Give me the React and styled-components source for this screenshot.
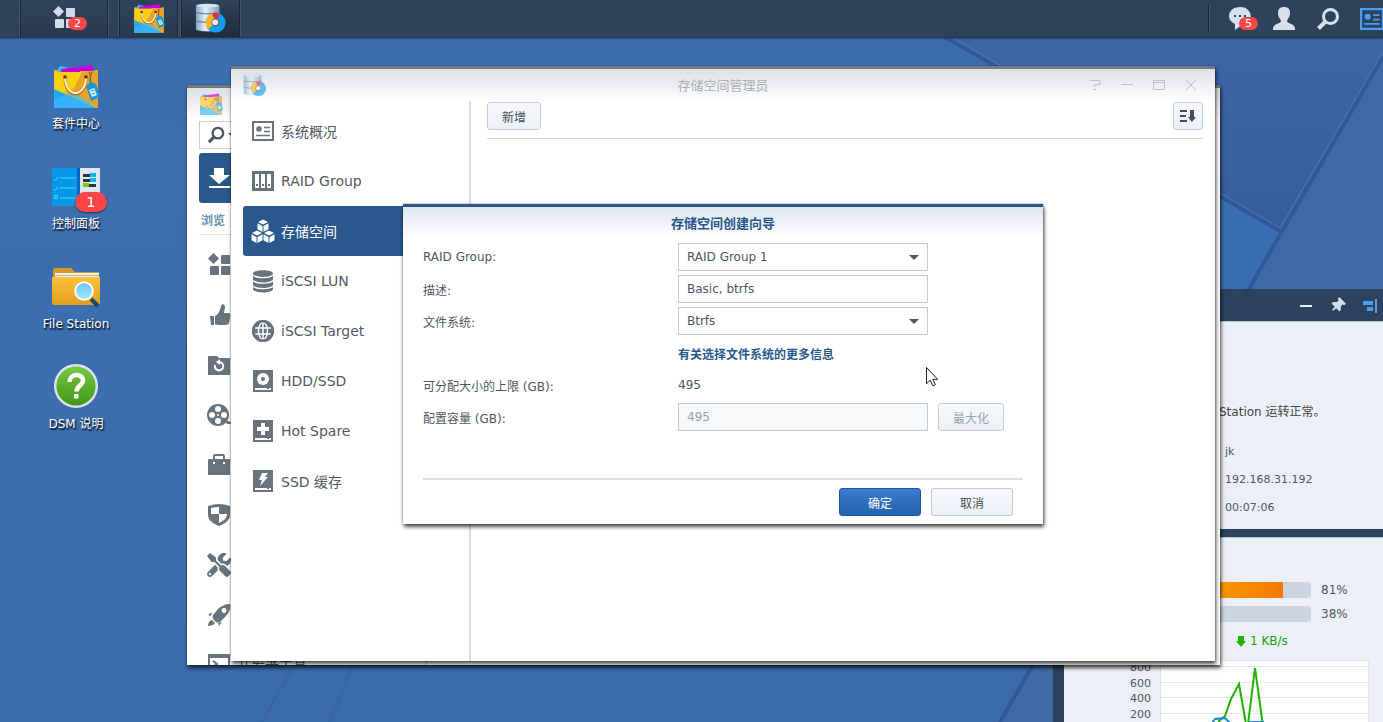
import React, { useState } from 'react'
import styled, { createGlobalStyle } from 'styled-components'
import { FaThumbtack, FaTools } from 'react-icons/fa'

const GlobalStyle = createGlobalStyle`
  * { box-sizing: border-box; }
  body {
    margin: 0;
    overflow: hidden;
    font-family: "DejaVu Sans", "Noto Sans CJK SC", sans-serif;
    font-size: 12px;
    color: #4d5762;
  }
  button, input, select { font: inherit; color: inherit; }
`

/* ---------- desktop ---------- */

const Desktop = styled.div`
  position: relative;
  display: flex;
  flex-direction: column;
  height: 100vh;
  overflow: hidden;
  background: #3b6dae;
`

const Wallpaper = styled.svg`
  position: absolute;
  inset: 0;
  width: 100%;
  height: 100%;
`

const Taskbar = styled.header`
  position: relative;
  display: flex;
  flex: none;
  height: 38px;
  background: #2e435b;
  border-bottom: 1px solid #273649;
  box-shadow: 0 1px 2px rgba(20, 40, 80, 0.4);
`

const TaskButton = styled.button`
  position: relative;
  display: flex;
  align-items: center;
  justify-content: center;
  width: ${({ $wide }) => ($wide ? '90px' : '61px')};
  margin-left: ${({ $gap }) => $gap || '0'};
  padding: 0 0 1px;
  border: 1px solid #44566b;
  border-width: 0 1px;
  background: linear-gradient(${({ $active }) => ($active ? '#2f435b, #1f2d3e' : '#2f435b, #283a4f')});
  box-shadow: inset 1px 0 0 #1b2735, inset -1px 0 0 #1b2735;
`

const Tray = styled.div`
  display: flex;
  flex: none;
  align-items: center;
  margin: 0 -11px 0 auto;
  padding-left: 10px;
  background: linear-gradient(#17202b, #17202b) 0 6px / 1px 25px no-repeat,
    linear-gradient(#4a5c72, #4a5c72) 1px 6px / 1px 25px no-repeat;
`

const TrayButton = styled.button`
  position: relative;
  display: flex;
  align-items: center;
  justify-content: center;
  width: 44px;
  height: 36px;
  padding: 0;
  border: 0;
  background: none;
`

const Badge = styled.span`
  position: absolute;
  left: ${({ $left }) => $left};
  top: ${({ $top }) => $top};
  min-width: ${({ $big }) => ($big ? '32px' : '19px')};
  border-radius: 10px;
  background: #fb4648;
  color: #fff;
  text-align: center;
  font-size: ${({ $big }) => ($big ? '14px' : '11px')};
  line-height: ${({ $big }) => ($big ? '20px' : '13px')};
  text-shadow: none;
  box-shadow: ${({ $big }) => ($big ? '0 1px 2px rgba(0,0,0,.5)' : 'none')};
`

const Shortcuts = styled.nav`
  position: relative;
  display: flex;
  flex-direction: column;
  width: 152px;
  padding-top: 24px;
`

const Shortcut = styled.a`
  position: relative;
  display: flex;
  flex-direction: column;
  align-items: center;
  gap: 6px;
  height: 100px;
  color: #fff;
  line-height: 16px;
  text-decoration: none;
  text-shadow: 1px 1px 2px #10254a, 1px 2px 1px rgba(0, 0, 0, 0.7);
`

/* ---------- windows ---------- */

const Window = styled.section`
  position: absolute;
  left: ${({ $left }) => $left};
  right: ${({ $right }) => $right};
  top: ${({ $top }) => $top};
  bottom: ${({ $bottom }) => $bottom};
  display: flex;
  flex-direction: column;
  overflow: ${({ $clip }) => ($clip ? 'hidden' : 'visible')};
  border-top: 3px solid #757a82;
  background: linear-gradient(#dcdfe4, #fff 32px);
  box-shadow: 0 0 1px rgba(0, 0, 0, 0.5), 1px 3px 4px rgba(0, 0, 0, 0.7);
`

const TitleBar = styled.div`
  display: grid;
  grid-template-columns: 1fr auto 1fr;
  flex: none;
  align-items: center;
  height: 32px;
  padding: 0 8px;
`

const TitleIcon = styled.span`
  display: flex;
  margin-left: 4px;
  opacity: 0.65;
`

const Title = styled.h1`
  margin: 0;
  padding-bottom: 2px;
  font-size: 13px;
  font-weight: 400;
  color: #a9b0b8;
`

const WindowTools = styled.div`
  display: flex;
  justify-content: flex-end;
`

const ToolButton = styled.button`
  display: flex;
  align-items: center;
  justify-content: center;
  width: 32px;
  height: 32px;
  padding: 0;
  border: 0;
  background: none;
`

const WindowBody = styled.div`
  display: flex;
  flex: 1;
  min-height: 0;
`

const Sidebar = styled.nav`
  width: 240px;
  padding: 5px 10px 0 12px;
  border-right: 2px solid #dcdcdc;
`

const SideItem = styled.a`
  display: flex;
  align-items: center;
  gap: 6px;
  height: 50px;
  padding-left: 8px;
  border-radius: 3px;
  background: ${({ $active }) => ($active ? '#29588d' : 'none')};
  color: ${({ $active }) => ($active ? '#fff' : '#505a64')};
  font-size: 14px;
  text-decoration: none;

  svg { flex: none; color: ${({ $active }) => ($active ? '#fff' : '#68737e')}; }
`

const Content = styled.main`
  flex: 1;
  padding: 1px 12px 0 16px;
`

const Toolbar = styled.div`
  display: flex;
  align-items: center;
  justify-content: space-between;
  height: 37px;
  padding-bottom: 8px;
  border-bottom: 1px solid #ccd6df;
`

const Button = styled.button`
  display: flex;
  align-items: center;
  justify-content: center;
  width: ${({ $width }) => $width};
  height: 28px;
  padding: 0;
  border: 1px solid ${({ $primary }) => ($primary ? '#1d559c' : '#c1ccd8')};
  border-radius: 3px;
  background: ${({ $primary }) =>
    $primary ? 'linear-gradient(#3b7dcb, #2261b0)' : 'linear-gradient(#f6fafd, #eaf1f7)'};
  color: ${({ $primary }) => ($primary ? '#fff' : '#454f59')};

  &:disabled { color: #9aa3ab; }
`

/* package center, mostly behind the front window */

const PackageNav = styled.nav`
  display: flex;
  flex-direction: column;
  width: 240px;
  padding-left: 12px;
  border-right: 2px solid #dcdcdc;
`

const SearchBox = styled.div`
  display: flex;
  flex: none;
  align-items: center;
  gap: 3px;
  height: 28px;
  margin: 1px 0 4px;
  padding-left: 7px;
  border: 1px solid #c6d0da;
`

const NavHeading = styled.h2`
  flex: none;
  height: 32px;
  margin: 0 0 5px;
  padding-left: 2px;
  border-bottom: 1px solid #dde3ea;
  color: #6e93ab;
  font-size: 12px;
  font-weight: 700;
  line-height: 36px;
`

const PackageItem = styled(SideItem)`
  flex: none;
`

/* ---------- wizard ---------- */

const Overlay = styled.div`
  position: absolute;
  inset: 0;
  display: flex;
  align-items: center;
  justify-content: center;
  padding-bottom: 2px;
`

const Dialog = styled.form`
  position: relative;
  display: flex;
  flex-direction: column;
  width: 640px;
  min-height: 320px;
  padding: 0 20px 8px;
  border-top: 3px solid #29588d;
  background: linear-gradient(#dde6f0, #fff 32px);
  box-shadow: 0 0 2px rgba(0, 0, 0, 0.4), 1px 3px 4px rgba(0, 0, 0, 0.7);
`

const DialogTitle = styled.h2`
  margin: 0;
  height: 36px;
  color: #29588d;
  font-size: 13px;
  line-height: 33px;
  text-align: center;
`

const Fields = styled.div`
  display: grid;
  grid-template-columns: 255px 250px auto;
  grid-auto-rows: 28px;
  row-gap: 4px;
  align-items: center;
  justify-content: start;
`

const Field = styled.input`
  width: 100%;
  height: 28px;
  padding: 0 8px;
  border: 1px solid #c1cbd5;
  background: #fff;

  &:disabled { background: #f6f8fa; color: #98a2ab; }
`

const SelectWrap = styled.div`
  position: relative;

  &::after {
    content: '';
    position: absolute;
    right: 9px;
    top: 12px;
    border: 5px solid transparent;
    border-top-color: #4a5562;
    border-bottom: 0;
    pointer-events: none;
  }
`

const Select = styled.select`
  display: block;
  width: 100%;
  height: 28px;
  padding: 0 8px;
  appearance: none;
  border: 1px solid #c1cbd5;
  border-radius: 0;
  background: #fff;
`

const InfoLink = styled.a`
  grid-column: 2 / 4;
  color: #29588d;
  font-weight: 700;
  text-decoration: none;
`

const MaxCell = styled.div`
  padding-left: 10px;
`

const Footer = styled.div`
  display: flex;
  justify-content: flex-end;
  gap: 10px;
  margin-top: auto;
  padding: 8px 10px 0 0;
  border-top: 2px solid #dedede;
`

const Pointer = styled.svg`
  position: absolute;
  left: 523px;
  top: 160px;
`

/* ---------- widgets ---------- */

const Widgets = styled.aside`
  position: absolute;
  right: -12px;
  top: 289px;
  bottom: 0;
  display: flex;
  flex-direction: column;
  gap: 8px;
  width: 342px;
  padding-left: 11px;
  background: rgba(45, 65, 90, 0.96);
`

const WidgetHead = styled.div`
  display: flex;
  align-items: center;
  justify-content: flex-end;
  gap: 18px;
  height: 24px;
  padding: 9px 16px 0 0;
`

const Widget = styled.section`
  flex: none;
  height: ${({ $height }) => $height};
  padding: ${({ $padding }) => $padding};
  border-top: 1px solid #b9c4d0;
  background: #ebf0f7;
`

const Greeting = styled.p`
  margin: 0 0 12px;
  padding-left: 155px;
  color: #444;
  line-height: 28px;
`

const Info = styled.p`
  margin: 0;
  padding-left: 161px;
  font-size: 11px;
  line-height: 28px;
`

const Meter = styled.div`
  display: flex;
  align-items: center;
  gap: 10px;
  height: 24px;
  padding-left: 100px;
`

const Track = styled.div`
  width: 147px;
  height: 16px;
  overflow: hidden;
  border-radius: 3px;
  background: #cdd6e0;
`

const Fill = styled.div`
  height: 100%;
  background: linear-gradient(90deg, #ffab00, #f57a00);
`

const Rate = styled.div`
  display: flex;
  align-items: center;
  gap: 4px;
  height: 30px;
  padding-left: 172px;
  color: #1fa30f;
`

/* ---------- icons ---------- */

const BagIcon = ({ size = 48 }) => (
  <svg width={size} height={size} viewBox="0 0 48 48">
    <path d="m5 9 3-5 14 3v4H5z" fill="#35c4f2" />
    <path d="m9 7 31-4 2 8H9z" fill="#c400e0" />
    <path d="M2 8h3l2 2h34l2-2h3v38H2z" fill="#f6b90f" />
    <path d="M28 9h18v37L20 29z" fill="#e9a32a" />
    <path d="M2 10h28l-8 16L2 34z" fill="#fccf13" />
    <path d="M2 27 44 46H2z" fill="#22a9f5" />
    <path d="M2 46v-8l20-9 22 17z" fill="#3db7fb" opacity=".7" />
    <path d="M13 17c1 20 20 20 21 0" fill="none" stroke="#b9780c" strokeWidth="3" />
    <path d="M13 16c1 20 20 20 21 0" fill="none" stroke="#fff1da" strokeWidth="2" />
    <circle cx="13" cy="15" r="1.8" fill="#5a3510" />
    <circle cx="34" cy="15" r="1.8" fill="#5a3510" />
    <path d="M37 10c3 4 1 8 1 13M40 10c-2 5-3 8-1 13" fill="none" stroke="#8a6a1a" strokeWidth="1.2" />
    <path d="m34 24 5-4 5 2 4 13-9 4z" fill="#149ad8" />
    <path d="m37 28 5-2 3 7-5 2z" fill="#d9f2fd" />
    <path d="m39 29 3-1m-2 4 3-1" stroke="#149ad8" />
  </svg>
)

const StorageIcon = ({ size = 34 }) => (
  <svg width={size} height={size} viewBox="0 0 34 34">
    <defs>
      <linearGradient id="disk">
        <stop offset="0" stopColor="#88a5bd" />
        <stop offset=".4" stopColor="#e6f0f8" />
        <stop offset="1" stopColor="#7d9ab3" />
      </linearGradient>
    </defs>
    <path d="M1 4c0-3 25-3 25 0v25c0 3-25 3-25 0z" fill="url(#disk)" />
    <path d="M1 11c6 2 19 2 25 0M1 20c6 2 19 2 25 0" stroke="#69869f" strokeWidth="1.3" fill="none" />
    <ellipse cx="13.500" cy="4" rx="11.500" ry="1.800" fill="#d5e5f1" />
    <circle cx="22" cy="22" r="10.500" fill="#139cf5" />
    <path d="M22 22 14 29A10.500 10.500 0 0 1 19 12z" fill="#ffb31e" />
    <path d="m22 22-4-9.700q4-1.500 8 0z" fill="#e8323b" />
    <circle cx="22" cy="22" r="4.500" fill="#5c7489" />
    <circle cx="21.500" cy="21.500" r="3" fill="#e9f1f7" />
  </svg>
)

const PanelIcon = () => (
  <svg width="48" height="48" viewBox="0 0 48 48">
    <path d="M0 6h27v38H0z" fill="#0996e6" />
    <path d="M27 6h21v38H27z" fill="#dfe7ee" />
    <path d="M25 6h3v38h-3z" fill="#0566c9" />
    <path d="m2 17 1.500 1.500L6 15M8 16h16M2 27l1.500 1.500L6 25M8 26h16M8 36h16M2.500 33.500h3v3h-3z" fill="none" stroke="#2ee0fb" strokeWidth="1" />
    <path d="M31 12h13v3H31zm0 5h13v3H31zm0 5h13v3H31z" fill="#30343a" />
    <path d="M38 11h6v4h-6zm0 5h6v4h-6z" fill="#12b4ed" />
    <path d="M31 21h6v4h-6z" fill="#77c90a" />
  </svg>
)

const FolderIcon = () => (
  <svg width="48" height="48" viewBox="0 0 48 48">
    <defs>
      <linearGradient id="folder" x2="0" y2="1">
        <stop offset="0" stopColor="#ffc13b" />
        <stop offset="1" stopColor="#dfa021" />
      </linearGradient>
      <linearGradient id="lens" x2="0" y2="1">
        <stop offset="0" stopColor="#64c6f8" />
        <stop offset="1" stopColor="#a9e8ff" />
      </linearGradient>
    </defs>
    <path d="M1 8q0-2 2-2h16l4 4h24v6H1z" fill="#d69a2b" />
    <path d="M3 11h44v4H3z" fill="#f4f1ec" />
    <path d="M2 13h45v1H2z" fill="#b9b3aa" />
    <path d="M0 15h48v26q0 2-2 2H2q-2 0-2-2z" fill="url(#folder)" />
    <path d="m39 37 7 7" stroke="#17496f" strokeWidth="4" />
    <circle cx="32" cy="29" r="8.800" fill="url(#lens)" stroke="#fbf8f0" strokeWidth="2" />
  </svg>
)

const HelpIcon = () => (
  <svg width="48" height="48" viewBox="0 0 48 48">
    <defs>
      <linearGradient id="help" x2="0" y2="1">
        <stop offset="0" stopColor="#79c943" />
        <stop offset="1" stopColor="#3f9617" />
      </linearGradient>
    </defs>
    <circle cx="24" cy="24" r="20.800" fill="url(#help)" stroke="#dce3ee" strokeWidth="2.400" />
    <path d="M17.500 20c0-9 13.500-9 13.500-1.500 0 5-6.500 5-6.500 11" fill="none" stroke="#fff" strokeWidth="4.500" />
    <path d="M22 32h4.500v4.500H22z" fill="#fff" />
  </svg>
)

const Tiles = ({ color = 'currentColor' }) => (
  <svg width="24" height="24" viewBox="0 0 24 24" fill={color}>
    <path d="m6.500 0 5.500 5.500L6.500 11 1 5.500z" />
    <rect x="14" y="2" width="9" height="9" rx="1" />
    <rect x="3" y="13" width="9" height="9" rx="1" />
    <rect x="14" y="13" width="9" height="9" rx="1" />
  </svg>
)

const Card = ({ color = 'currentColor', size = 22 }) => (
  <svg width={size} height={size} viewBox="0 0 22 22" fill="none" stroke={color}>
    <path d="M1 2h20v18H1z" strokeWidth="2" />
    <circle cx="7" cy="9" r="2.800" fill={color} stroke="none" />
    <path d="M12 7.500h6M12 11.500h6M4 15.500h14" strokeWidth="1.600" />
  </svg>
)

const Search = ({ color, size = 24 }) => (
  <svg width={size} height={size} viewBox="0 0 24 24" fill="none" stroke={color}>
    <circle cx="14.500" cy="9.500" r="7" strokeWidth="3" />
    <path d="m9.500 14.500-7 7" strokeWidth="4" />
  </svg>
)

const Glyph = ({ children }) => (
  <svg width="24" height="24" viewBox="0 0 24 24" fill="currentColor">{children}</svg>
)

const RaidGlyph = () => (
  <Glyph>
    <path fillRule="evenodd" d="M1 2h22v20H1zm3 3v14h4V5zm6 0v14h4V5zm6 0v14h4V5z" />
    <path d="M5 15h2v2H5zm6 0h2v2h-2zm6 0h2v2h-2z" />
  </Glyph>
)

const CubesGlyph = () => (
  <Glyph>
    {[[12, 0], [6, 11], [18, 11]].map(([x, y]) => (
      <g key={x} transform={`translate(${x} ${y})`}>
        <path d="m0 .5 5 2.500-5 2.600L-5 3z" />
        <path d="M-5.500 4.300-.5 7v6l-5-2.700z" />
        <path d="M5.500 4.300.5 7v6l5-2.700z" />
      </g>
    ))}
  </Glyph>
)

const LunGlyph = () => (
  <Glyph>
    <path d="M2 4.500C2 0 22 0 22 4.500S2 9 2 4.500z" />
    <path d="M2 7c3 3 17 3 20 0v3.500c-2 4-18 4-20 0zm0 5.500c3 3 17 3 20 0V16c-2 4-18 4-20 0zM2 18c3 3 17 3 20 0v2.500c-2 4-18 4-20 0z" />
  </Glyph>
)

const GlobeGlyph = () => (
  <Glyph>
    <circle cx="12" cy="12" r="11" />
    <path d="M12 4v16M4 9h16M4 15h16" stroke="#fff" strokeWidth="1.500" fill="none" />
    <ellipse cx="12" cy="12" rx="4.500" ry="8.500" stroke="#fff" strokeWidth="1.500" fill="none" />
    <circle cx="12" cy="12" r="9.700" fill="none" stroke="currentColor" strokeWidth="2.600" />
  </Glyph>
)

const DriveGlyph = ({ children }) => (
  <Glyph>
    <path d="M2 1h20v22H2z" />
    <path d="M4 19h16v2H4z" fill="#fff" />
    <path d="M16 19h2v1h-2z" />
    {children}
  </Glyph>
)

const ThumbGlyph = () => (
  <Glyph>
    <path d="M3 13h4v9H4z" />
    <path d="M8 13c4-2 5-6 6-10 1-3 4-2 4 1 0 2-1 4-1 6h5q2 1 1 4l-1 6q-1 2-3 2h-7q-2 0-4-1z" />
  </Glyph>
)

const RocketGlyph = () => (
  <Glyph>
    <path fillRule="evenodd" d="M23 1c1 5-1 9-4 12l-6 6q-2 1-4 0l-3-3q-1-2 0-4l5-6c3-3 7-5 12-5zm-6 4a2.500 2.500 0 1 0 .1 0z" />
    <path d="m1 12 4-3-1 4zM12 23l3-4-4 1zM1 23q0-5 4-6l3 3q-2 3-7 3z" />
  </Glyph>
)

const ShieldGlyph = () => (
  <Glyph>
    <path d="M1 3q11-4 22 0v9c0 6-6 9-11 11C7 21 1 18 1 12z" />
    <path d="M4 5q4-1 8-1v7H4zM12 11h8c0 5-4 7-8 9z" fill="#fff" />
  </Glyph>
)

const ReelGlyph = () => (
  <Glyph>
    <circle cx="11" cy="12" r="11" />
    <path d="m18 17 6 2v2h-4z" />
    <g fill="#fff">
      <circle cx="11" cy="6" r="3" />
      <circle cx="11" cy="18" r="3" />
      <circle cx="5" cy="12" r="3" />
      <circle cx="17" cy="12" r="3" />
      <circle cx="11" cy="12" r="1" />
    </g>
  </Glyph>
)

const RestoreGlyph = () => (
  <Glyph>
    <path d="M1 4q0-1 1-1h8l2 2h11v17H1z" />
    <path d="M8 12a4.200 4.200 0 1 0 4-3" stroke="#fff" strokeWidth="2" fill="none" />
    <path d="M13 6v6L9 9z" fill="#fff" />
  </Glyph>
)

const CaseGlyph = () => (
  <Glyph>
    <path d="M7 7V3q0-1 1-1h8q1 0 1 1v4" fill="none" stroke="currentColor" strokeWidth="2" />
    <rect x="1" y="6" width="22" height="16" rx="1" />
    <path d="M6 9h2v2H6zm10 0h2v2h-2z" fill="#fff" />
  </Glyph>
)

const DownloadGlyph = () => (
  <Glyph>
    <path d="M7 2h10v7h6l-11 9L2 9h5zM2 20h21v2H2z" />
  </Glyph>
)

const TerminalGlyph = () => (
  <Glyph>
    <path fillRule="evenodd" d="M1 1h22v20H1zm2 4v14h18V5z" />
    <path d="m6 8 4 3-4 3" fill="none" stroke="currentColor" strokeWidth="2" />
  </Glyph>
)

/* ---------- data ---------- */

const sideItems = [
  { label: '系统概况', icon: <Glyph><g transform="translate(1 1)"><Card /></g></Glyph> },
  { label: 'RAID Group', icon: <RaidGlyph /> },
  { label: '存储空间', icon: <CubesGlyph />, active: true },
  { label: 'iSCSI LUN', icon: <LunGlyph /> },
  { label: 'iSCSI Target', icon: <GlobeGlyph /> },
  {
    label: 'HDD/SSD',
    icon: <DriveGlyph><circle cx="12" cy="10" r="6" fill="#fff" /><circle cx="12" cy="10" r="2" /></DriveGlyph>,
  },
  {
    label: 'Hot Spare',
    icon: <DriveGlyph><path d="M10 4h4v4h4v4h-4v4h-4v-4H6V8h4z" fill="#fff" /></DriveGlyph>,
  },
  {
    label: 'SSD 缓存',
    icon: <DriveGlyph><path d="M11 4h6l-3 4h3l-8 9 2-6H8z" fill="#fff" /></DriveGlyph>,
  },
]

const packageItems = [
  { icon: <Tiles /> },
  { icon: <ThumbGlyph /> },
  { icon: <RestoreGlyph /> },
  { icon: <ReelGlyph /> },
  { icon: <CaseGlyph /> },
  { icon: <ShieldGlyph /> },
  { icon: <FaTools size={24} /> },
  { icon: <RocketGlyph /> },
  { icon: <TerminalGlyph />, label: '开发者工具' },
]

const shortcuts = [
  { label: '套件中心', icon: <BagIcon /> },
  { label: '控制面板', icon: <PanelIcon />, badge: '1' },
  { label: 'File Station', icon: <FolderIcon /> },
  { label: 'DSM 说明', icon: <HelpIcon /> },
]

const meters = [81, 38]

function WallpaperArt() {
  return (
    <Wallpaper viewBox="0 0 1383 722" preserveAspectRatio="xMaxYMin slice">
      <defs>
        <linearGradient id="sky" x2="0" y2="1">
          <stop offset="0" stopColor="#3a6bac" />
          <stop offset=".2" stopColor="#3d70b1" />
          <stop offset="1" stopColor="#3b6bac" />
        </linearGradient>
        <linearGradient id="shade" x2="0" y2="1">
          <stop offset="0" stopColor="#3c68a4" />
          <stop offset="1" stopColor="#385d9d" />
        </linearGradient>
      </defs>
      <path d="M0 0h1383v722H0z" fill="url(#sky)" />
      <path d="M940 34h443v21l-103 175z" fill="url(#shade)" />
      <path d="M1383 55v667h-383z" fill="#3c6ba6" />
      <path d="M1280 230 1100 125v400z" fill="#3a70b2" />
      <path d="M1383 57 1281 233l-281 489M1280 231 940 34" fill="none" stroke="#31589a" strokeWidth="4" />
      <path d="M1383 52 1280 228 946 34" fill="none" stroke="#4f7ab4" strokeWidth="1" />
      <path d="m262 722 34-60M330 722l24-60" stroke="#3866a6" strokeWidth="3" />
    </Wallpaper>
  )
}

function WindowButtons() {
  return (
    <WindowTools>
      <ToolButton aria-label="帮助">
        <svg width="12" height="12" fill="none" stroke="#bcc2c8" strokeWidth="1">
          <path d="M1 1.500h10v4H5.500V8M4 10.500h3" />
        </svg>
      </ToolButton>
      <ToolButton aria-label="最小化">
        <svg width="12" height="12" stroke="#bcc2c8"><path d="M0 5.500h12" /></svg>
      </ToolButton>
      <ToolButton aria-label="最大化窗口">
        <svg width="12" height="12" fill="none" stroke="#bcc2c8">
          <path d="M.5 1.500h11v9H.5zM.5 3.500h11" />
        </svg>
      </ToolButton>
      <ToolButton aria-label="关闭">
        <svg width="12" height="12" stroke="#bcc2c8"><path d="m1 1 10 10M11 1 1 11" /></svg>
      </ToolButton>
    </WindowTools>
  )
}

function PackageCenter() {
  return (
    <Window $left="187px" $right="163px" $top="85px" $bottom="57px" $clip>
      <TitleBar>
        <TitleIcon><BagIcon size={24} /></TitleIcon>
      </TitleBar>
      <WindowBody>
        <PackageNav>
          <SearchBox>
            <Search color="#4c5662" size={18} />
            <svg width="8" height="4" fill="#4c5662"><path d="M0 0h8L4 4z" /></svg>
          </SearchBox>
          <PackageItem href="#" $active aria-label="已安装"><DownloadGlyph /></PackageItem>
          <NavHeading>浏览</NavHeading>
          {packageItems.map((item, index) => (
            <PackageItem href="#" key={index}>{item.icon}{item.label}</PackageItem>
          ))}
        </PackageNav>
      </WindowBody>
    </Window>
  )
}

function Wizard() {
  const [desc, setDesc] = useState('Basic, btrfs')

  return (
    <Overlay>
      <Dialog onSubmit={(e) => e.preventDefault()}>
        <DialogTitle>存储空间创建向导</DialogTitle>
        <Fields>
          <label htmlFor="group">RAID Group:</label>
          <SelectWrap>
            <Select id="group"><option>RAID Group 1</option></Select>
          </SelectWrap>
          <span />
          <label htmlFor="desc">描述:</label>
          <Field id="desc" value={desc} onChange={(e) => setDesc(e.target.value)} />
          <span />
          <label htmlFor="fs">文件系统:</label>
          <SelectWrap>
            <Select id="fs"><option>Btrfs</option></Select>
          </SelectWrap>
          <span />
          <InfoLink href="#">有关选择文件系统的更多信息</InfoLink>
          <span>可分配大小的上限 (GB):</span>
          <span>495</span>
          <span />
          <label htmlFor="size">配置容量 (GB):</label>
          <Field id="size" defaultValue="495" disabled />
          <MaxCell><Button type="button" $width="66px" disabled>最大化</Button></MaxCell>
        </Fields>
        <Footer>
          <Button type="submit" $width="82px" $primary>确定</Button>
          <Button type="button" $width="82px">取消</Button>
        </Footer>
        <Pointer width="13" height="20" viewBox="0 0 13 20">
          <path d="M.5.500v16.300l3.700-3.600 2.600 5.600 2.500-1.200-2.500-5.300h4.900z" fill="#fff" stroke="#1d2030" />
        </Pointer>
      </Dialog>
    </Overlay>
  )
}

function StorageManager() {
  return (
    <Window $left="231px" $right="168px" $top="66px" $bottom="61px">
      <TitleBar>
        <TitleIcon><StorageIcon size={24} /></TitleIcon>
        <Title>存储空间管理员</Title>
        <WindowButtons />
      </TitleBar>
      <WindowBody>
        <Sidebar>
          {sideItems.map((item) => (
            <SideItem href="#" key={item.label} $active={item.active}>
              {item.icon}
              {item.label}
            </SideItem>
          ))}
        </Sidebar>
        <Content>
          <Toolbar>
            <Button $width="54px">新增</Button>
            <Button $width="30px" aria-label="排序">
              <svg width="18" height="14" fill="#444d58">
                <path d="M1 1h7v2H1zm0 5h6v2H1zm0 5h7v2H1zM11 1h4v7h2l-4 5-4-5h2z" />
              </svg>
            </Button>
          </Toolbar>
        </Content>
      </WindowBody>
      <Wizard />
    </Window>
  )
}

function WidgetPanel() {
  return (
    <Widgets>
      <WidgetHead>
        <svg width="12" height="12"><path d="M0 5h12v2H0z" fill="#e8eef5" /></svg>
        <FaThumbtack size={15} color="#d5dfe9" transform="rotate(45)" />
        <svg width="16" height="14" fill="#4a9ff5"><path d="M0 2h10v4H0zm4 6h6v4H4zm8-8h2v14h-2z" /></svg>
      </WidgetHead>
      <Widget $height="208px" $padding="76px 0 0">
        <Greeting>Station 运转正常。</Greeting>
        <Info>jk</Info>
        <Info>192.168.31.192</Info>
        <Info>00:07:06</Info>
      </Widget>
      <Widget $height="200px" $padding="40px 0 0">
        {meters.map((value) => (
          <Meter key={value}>
            <Track><Fill style={{ width: `${value}%` }} /></Track>
            {value}%
          </Meter>
        ))}
        <Rate>
          <svg width="10" height="11" fill="#1db300"><path d="M2 0h6v5h2l-5 6-5-6h2z" /></svg>
          1 KB/s
        </Rate>
        <svg width="330" height="90" viewBox="0 0 330 90">
          <path d="M96.500 4.500h208v90h-208z" fill="#fff" stroke="#dbe5ee" />
          <path d="M97 10.500h207M97 26.500h207M97 41.500h207M97 57.500h207" stroke="#dbe7f2" />
          <g fontSize="11" fill="#4d5762" textAnchor="end">
            <text x="87" y="15">800</text>
            <text x="87" y="31">600</text>
            <text x="87" y="46">400</text>
            <text x="87" y="62">200</text>
          </g>
          <path d="m154 66 7-6 6-17 8-15 7 40h2l7-56 8 58" fill="none" stroke="#1db300" strokeWidth="2" />
          <path d="m146 70 5-7 10-1 6 6h15l4-2h14" fill="none" stroke="#1587dd" strokeWidth="2" />
        </svg>
      </Widget>
    </Widgets>
  )
}

export default function App() {
  return (
    <Desktop>
      <GlobalStyle />
      <WallpaperArt />
      <Taskbar>
        <TaskButton $wide $gap="19px" aria-label="主菜单">
          <Tiles color="#d3dde8" />
          <Badge $left="48px" $top="17px">2</Badge>
        </TaskButton>
        <TaskButton $gap="9px" aria-label="套件中心"><BagIcon size={32} /></TaskButton>
        <TaskButton $gap="1px" $active aria-label="存储空间管理员"><StorageIcon size={32} /></TaskButton>
        <Tray>
          <TrayButton aria-label="通知">
            <svg width="22" height="23" fill="#d8e1eb">
              <path d="M11 0c14 0 14 18 2 18l-7 5v-6C-4 13-1 0 11 0z" />
              <path d="M5 8h2v2H5zm5 0h2v2h-2zm5 0h2v2h-2z" fill="#2e435b" />
            </svg>
            <Badge $left="21px" $top="16px">5</Badge>
          </TrayButton>
          <TrayButton aria-label="用户">
            <svg width="22" height="23" fill="#d8e1eb">
              <path d="M11 0c4 0 6 2 6 6 0 4-2 5-3 8 0 3 8 2 8 8v1H0v-1c0-6 8-5 8-8-1-3-3-4-3-8 0-4 2-6 6-6z" />
            </svg>
          </TrayButton>
          <TrayButton aria-label="搜索"><Search color="#d8e1eb" /></TrayButton>
          <TrayButton aria-label="小工具"><Card color="#4a9ff5" size={24} /></TrayButton>
        </Tray>
      </Taskbar>
      <Shortcuts>
        {shortcuts.map((item) => (
          <Shortcut href="#" key={item.label}>
            {item.icon}
            {item.badge && <Badge $big $left="75px" $top="30px">{item.badge}</Badge>}
            {item.label}
          </Shortcut>
        ))}
      </Shortcuts>
      <WidgetPanel />
      <PackageCenter />
      <StorageManager />
    </Desktop>
  )
}
